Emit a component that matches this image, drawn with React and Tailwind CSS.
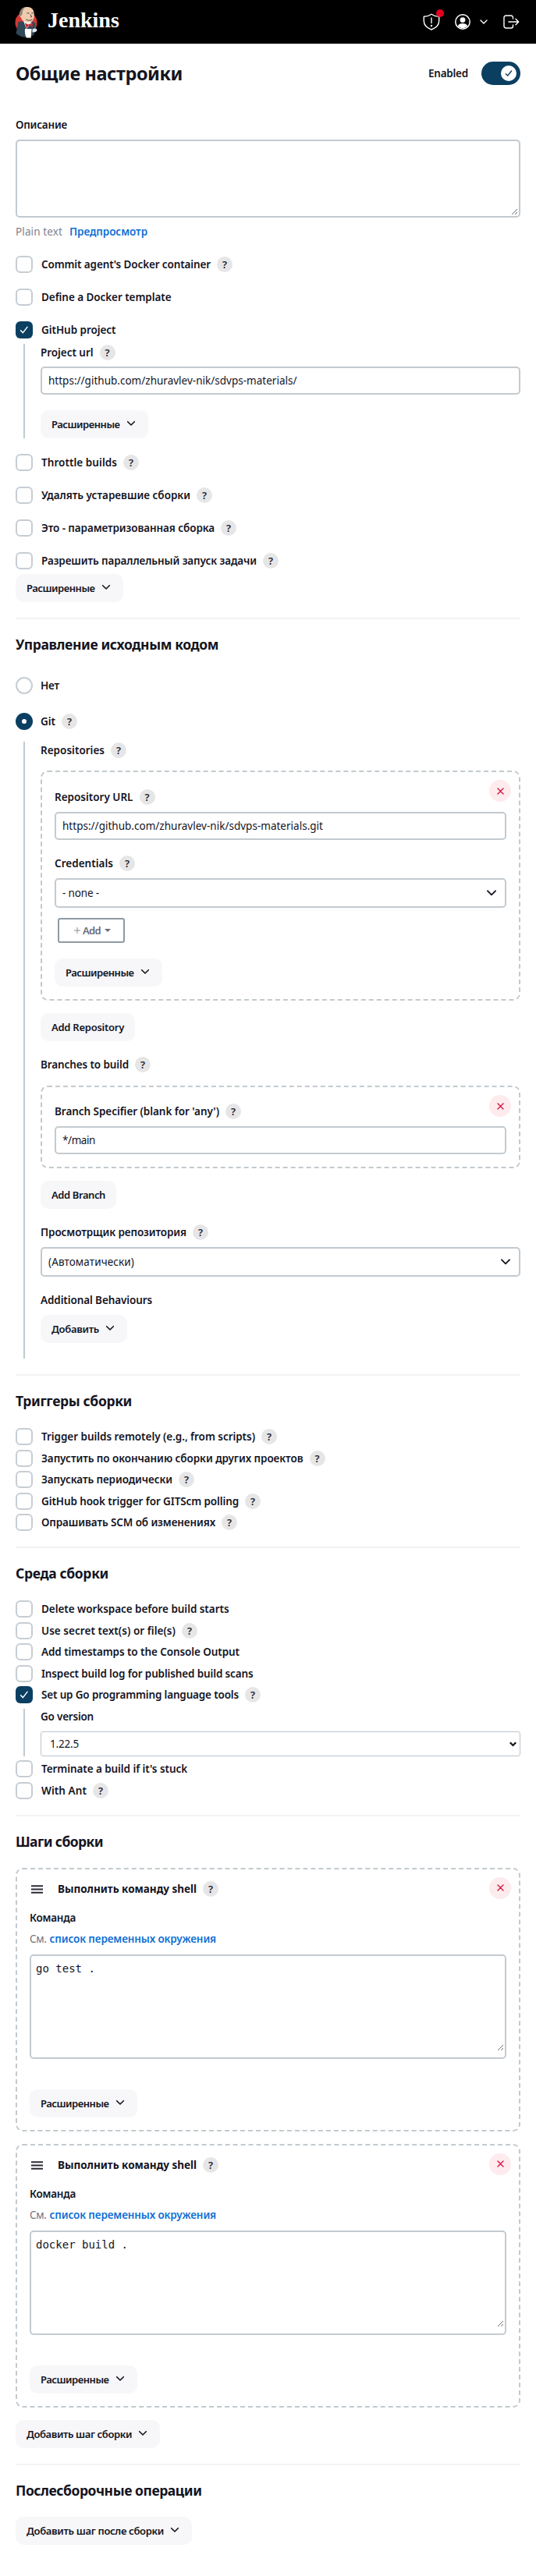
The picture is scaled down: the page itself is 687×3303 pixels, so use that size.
import { useLayoutEffect, useRef, useState } from "react";

/* Text whose letter spacing is adjusted so that the line takes up `w` pixels. */
function Fit({ w, className = "", children }) {
  const ref = useRef(null);
  const [spacing, setSpacing] = useState(0);
  useLayoutEffect(() => {
    const natural = ref.current.getBoundingClientRect().width;
    setSpacing((w - natural) / String(children).length);
  }, [w, children]);
  return (
    <span ref={ref} className={`inline-block shrink-0 whitespace-pre ${className}`} style={{ letterSpacing: `${spacing}px` }}>
      {children}
    </span>
  );
}

function Help() {
  return (
    <span className="ml-2 flex size-5 shrink-0 items-center justify-center rounded-full bg-[#e6e6e7] text-[13px] leading-5 font-semibold text-[#23232d]">
      ?
    </span>
  );
}

function Chevron({ className = "" }) {
  return (
    <svg className={className} width="12" height="8" viewBox="0 0 12 8" fill="none" stroke="currentColor" strokeWidth="1.6" strokeLinecap="round" strokeLinejoin="round">
      <path d="M1.7 1.7 6 6l4.3-4.3" />
    </svg>
  );
}

function Checkbox({ checked }) {
  if (checked) {
    return (
      <span className="flex size-[22px] shrink-0 items-center justify-center rounded-[6px] bg-[#0b3f62] text-white">
        <svg width="12" height="12" viewBox="0 0 12 12" fill="none" stroke="currentColor" strokeWidth="1.5" strokeLinecap="round" strokeLinejoin="round">
          <path d="M1.6 6.8 4.4 9.6 10 2.4" />
        </svg>
      </span>
    );
  }
  return <span className="size-[22px] shrink-0 rounded-[6px] border-2 border-[#c7cdd3] bg-white" />;
}

function Check({ w, help, checked, className = "", children }) {
  return (
    <div className={`flex h-[22px] items-center ${className}`}>
      <Checkbox checked={checked} />
      <Fit w={w} className="ml-[11px] font-semibold">{children}</Fit>
      {help && <Help />}
    </div>
  );
}

function Radio({ w, help, checked, className = "", children }) {
  return (
    <div className={`flex h-[22px] items-center ${className}`}>
      {checked ? (
        <span className="flex size-[22px] shrink-0 items-center justify-center rounded-full bg-[#0b3f62]">
          <span className="size-[6px] rounded-full bg-white" />
        </span>
      ) : (
        <span className="size-[22px] shrink-0 rounded-full border-2 border-[#c7cdd3] bg-white" />
      )}
      <Fit w={w} className="ml-2.5 font-semibold">{children}</Fit>
      {help && <Help />}
    </div>
  );
}

function Label({ w, help, className = "", children }) {
  return (
    <div className={`flex h-5 items-center ${className}`}>
      <Fit w={w} className="font-semibold">{children}</Fit>
      {help && <Help />}
    </div>
  );
}

function Input({ w, className = "", children }) {
  return (
    <div className={`flex h-9 items-center rounded-[5px] border-2 border-[#c3cacf] bg-white px-2 ${className}`}>
      <Fit w={w}>{children}</Fit>
    </div>
  );
}

function Select({ w, className = "", children }) {
  return (
    <div className={`flex h-[38px] items-center justify-between rounded-[5px] border-2 border-[#c3cacf] bg-white pr-2.5 pl-2 ${className}`}>
      <Fit w={w}>{children}</Fit>
      <Chevron className="h-[10px] w-[14px]" />
    </div>
  );
}

function Button({ w, chevron, className = "", children }) {
  return (
    <div className={`flex h-9 w-fit items-center rounded-[10px] bg-[#f7f7f9] px-[14px] text-[13px] font-semibold ${className}`}>
      <Fit w={w}>{children}</Fit>
      {chevron && <Chevron className="mr-0.5 mb-0.5 ml-[8px]" />}
    </div>
  );
}

function Remove() {
  return (
    <span className="absolute top-[10px] right-[10px] flex size-7 items-center justify-center rounded-full bg-[#fdebee] text-[#d5143f]">
      <svg width="9" height="9" viewBox="0 0 9 9" fill="none" stroke="currentColor" strokeWidth="1.4" strokeLinecap="round">
        <path d="M1 1l7 7M8 1 1 8" />
      </svg>
    </span>
  );
}

function Heading({ w, className = "", children }) {
  return (
    <div className={`flex h-6 items-center text-[17.5px] font-bold ${className}`}>
      <Fit w={w}>{children}</Fit>
    </div>
  );
}

function Rule({ className = "" }) {
  return <div className={`h-0.5 bg-[#f3f3f4] ${className}`} />;
}

function Nested({ className = "", children }) {
  return <div className={`ml-[10px] border-l-2 border-[#c1cace] pl-5 ${className}`}>{children}</div>;
}

function Resizer({ className = "" }) {
  return (
    <svg className={className} width="9" height="9" viewBox="0 0 9 9" fill="none" stroke="#6c7075" strokeWidth="1">
      <path d="M1 8 8 1M5 8l3-3" />
    </svg>
  );
}

function Step({ command, className = "" }) {
  return (
    <div className={`relative h-[338px] rounded-[9px] border-2 border-dashed border-[#c3cacf] px-4 pt-[15px] ${className}`}>
      <Remove />
      <div className="flex h-5 items-center pl-[2px]">
        <svg className="mt-[2px]" width="15" height="11" viewBox="0 0 15 11" fill="none" stroke="#2b2b35" strokeWidth="1.9">
          <path d="M0 1.2h15M0 5.5h15M0 9.8h15" />
        </svg>
        <Fit w={178} className="ml-[19px] font-bold">Выполнить команду shell</Fit>
        <Help />
      </div>
      <Label w={59} className="mt-[17px]">Команда</Label>
      <div className="mt-[7px] flex h-5 items-center gap-1">
        <Fit w={21.5} className="text-[#73737f]">См.</Fit>
        <Fit w={213.5} className="font-semibold text-[#0f6fd3]">список переменных окружения</Fit>
      </div>
      <div className="mt-[10px] flex h-[134px] justify-between rounded-[5px] border-2 border-[#c3cacf] bg-white">
        <span className="pt-[6px] pl-[6px] font-['DejaVu_Sans_Mono',monospace] text-[14px] leading-5 whitespace-pre">{command}</span>
        <Resizer className="mt-[113px] mr-px" />
      </div>
      <Button w={87.5} chevron className="mt-[39px]">Расширенные</Button>
    </div>
  );
}

function JenkinsLogo() {
  return (
    <svg width="30" height="41" viewBox="0 0 30 41">
      <circle cx="14.5" cy="21" r="14" fill="#d33833" />
      <path d="M4.5 20 1.5 35c4 3 8 5 14 5l9-3 2-15-5-3z" fill="#2f4757" />
      <path d="M7 6.5C8.500 1.500 14 .3 18.500 1.200c4.500 1 6.500 5 6.300 10.500-.1 5-1.800 9.300-7.800 9.300-5 0-8-2.500-9-6.500C5.500 13 5.500 9 7 6.500z" fill="#eecbae" />
      <path d="M6.300 8.500C7.300 3 12 .8 15.500.8 10.500 2.500 9.500 6 9.500 10l-1 2-2 .5c-.5-1.500-.5-2.700-.2-4z" fill="#8d8174" />
      <path d="M15.500 8.800h3M21.300 8.800h2.400M20 10.500l1.500 3-1.500.5M14.500 17c2.500 1.800 6 1.500 8-.4" fill="none" stroke="#3d2a24" strokeWidth=".9" />
      <path d="M11 18.500 14.500 29l7.500-7.500-2-1.500-5 .5z" fill="#f2f2ee" />
      <path d="M13 21.500l4.500 2 5-2.500.6 5.500-5-1.500-4 3z" fill="#c62f3a" />
      <path d="M13 29h8.500l-.8 11.500H15c-2-3-2.300-7-2-11.500z" fill="#fff" />
      <path d="M22.500 29.500c2-1.500 5-1.500 5.800.3.5 1.700-.8 3.200-2.800 3.500l-3 .2z" fill="#dce6ee" />
    </svg>
  );
}

function Header() {
  return (
    <header className="flex h-14 items-center bg-black pr-[21px] pl-[19px] text-white">
      <JenkinsLogo />
      <span className="mb-1 ml-3 font-['Liberation_Serif',serif] text-[28px] leading-8 font-bold">Jenkins</span>
      <span className="relative ml-auto">
        <svg width="22" height="22" viewBox="0 0 22 22" fill="none" stroke="currentColor" strokeWidth="1.4" strokeLinecap="round" strokeLinejoin="round">
          <path d="M11 1.200C8.500 3 5 4.100 1.300 4.300v5.500c0 5.200 4.500 9.300 9.700 11.200 5.200-1.900 9.700-6 9.700-11.200V4.300C17 4.100 13.500 3 11 1.200z" />
          <path d="M11 6v6.500" />
          <circle cx="11" cy="16" r=".5" fill="currentColor" />
        </svg>
        <span className="absolute -top-[5px] -right-[5px] size-[10px] rounded-full bg-[#e6001f]" />
      </span>
      <svg className="ml-[19px]" width="20" height="20" viewBox="0 0 20 20" fill="none">
        <circle cx="10" cy="10" r="9.200" stroke="currentColor" strokeWidth="1.5" />
        <circle cx="10" cy="7.600" r="3.400" fill="currentColor" />
        <path d="M3.800 15.200c1-2.300 3.400-3.200 6.200-3.200s5.200.9 6.200 3.200C14.700 17 12.500 18.100 10 18.100S5.300 17 3.800 15.200z" fill="currentColor" />
      </svg>
      <svg className="ml-[12px]" width="10" height="6" viewBox="0 0 10 6" fill="none" stroke="currentColor" strokeWidth="1.400" strokeLinecap="round" strokeLinejoin="round">
        <path d="M1 1l4 4 4-4" />
      </svg>
      <svg className="ml-[20px]" width="21" height="18" viewBox="0 0 21 18" fill="none" stroke="currentColor" strokeWidth="1.400" strokeLinecap="round" strokeLinejoin="round">
        <path d="M12.500 5V3.500A2.500 2.500 0 0 0 10 1H3.500A2.500 2.500 0 0 0 1 3.500v11A2.500 2.500 0 0 0 3.500 17H10a2.500 2.500 0 0 0 2.500-2.500V13M7 9h12.500M16 5.200 19.700 9 16 12.800" />
      </svg>
    </header>
  );
}

export default function App() {
  return (
    <div className="min-h-[3303px] w-[687px] bg-white font-['Noto_Sans',sans-serif] text-[13.5px] leading-5 text-[#14141f]">
      <Header />
      <main className="flex flex-col px-5 pt-[23px]">
        <div className="flex h-[30px] items-center">
          <Fit w={214} className="text-[23.5px] font-bold">Общие настройки</Fit>
          <Fit w={51} className="ml-auto font-semibold">Enabled</Fit>
          <span className="ml-[17px] flex h-[30px] w-[50px] items-center justify-end rounded-full bg-[#0b3f62] pr-[5px]">
            <span className="flex size-5 items-center justify-center rounded-full bg-white">
              <svg width="10" height="10" viewBox="0 0 12 12" fill="none" stroke="#0b3f62" strokeWidth="1.700" strokeLinecap="round" strokeLinejoin="round">
                <path d="M1.600 6.800 4.400 9.600 10.400 2.400" />
              </svg>
            </span>
          </span>
        </div>

        <Label w={66} className="mt-[41px]">Описание</Label>
        <div className="mt-[9px] flex h-[100px] items-end justify-end rounded-[5px] border-2 border-[#c3cacf] bg-white">
          <Resizer className="mr-px mb-px" />
        </div>
        <div className="mt-[8px] flex h-5 items-center gap-[9px]">
          <Fit w={60} className="text-[#82828e]">Plain text</Fit>
          <Fit w={100} className="font-semibold text-[#0f6fd3]">Предпросмотр</Fit>
        </div>

        <div className="mt-[21px] flex flex-col gap-5">
          <Check w={217} help>Commit agent's Docker container</Check>
          <Check w={166.5}>Define a Docker template</Check>
          <Check w={95.5} checked>GitHub project</Check>
        </div>
        <Nested className="mt-[7px] h-[121px]">
          <Label w={67.5} help className="pt-px">Project url</Label>
          <Input w={318.5} className="mt-[9px]">https://github.com/zhuravlev-nik/sdvps-materials/</Input>
          <Button w={87.5} chevron className="mt-5">Расширенные</Button>
        </Nested>
        <div className="mt-5 flex flex-col gap-5">
          <Check w={97} help>Throttle builds</Check>
          <Check w={191} help>Удалять устаревшие сборки</Check>
          <Check w={222} help>Это - параметризованная сборка</Check>
          <Check w={276} help>Разрешить параллельный запуск задачи</Check>
        </div>
        <Button w={87.5} chevron className="mt-[6px]">Расширенные</Button>
        <Rule className="mt-5" />

        <Heading w={260} className="mt-[20px]">Управление исходным кодом</Heading>
        <Radio w={24} className="mt-[30px]">Нет</Radio>
        <Radio w={19} help checked className="mt-6">Git</Radio>
        <Nested className="mt-[15px] h-[791px] pt-px">
          <Label w={82} help>Repositories</Label>
          <div className="relative mt-4 h-[295px] rounded-[9px] border-2 border-dashed border-[#c3cacf] px-4 pt-[22px]">
            <Remove />
            <Label w={100.500} help>Repository URL</Label>
            <Input w={334} className="mt-[9px]">https://github.com/zhuravlev-nik/sdvps-materials.git</Input>
            <Label w={75} help className="mt-5">Credentials</Label>
            <Select w={47} className="mt-[9px]">- none -</Select>
            <div className="mt-[13px] ml-1 flex h-8 w-[86px] items-center rounded-[3px] border-2 border-[#8f9aa3] pl-[19px] text-[13px] text-[#6b6b7c]">
              <svg width="8" height="8" viewBox="0 0 8 8" stroke="#8b8b98" strokeWidth="1">
                <path d="M4 0v8M0 4h8" />
              </svg>
              <Fit w={23} className="ml-[3px] font-semibold">Add</Fit>
              <svg className="ml-[5px]" width="8" height="4" viewBox="0 0 8 4" fill="currentColor">
                <path d="M0 0h8L4 4z" />
              </svg>
            </div>
            <Button w={87.5} chevron className="mt-5">Расширенные</Button>
          </div>
          <Button w={93} className="mt-4">Add Repository</Button>
          <Label w={113} help className="mt-5">Branches to build</Label>
          <div className="relative mt-[17px] h-[106px] rounded-[9px] border-2 border-dashed border-[#c3cacf] px-4 pt-[21px]">
            <Remove />
            <Label w={211} help>Branch Specifier (blank for 'any')</Label>
            <Input w={42} className="mt-[9px]">*/main</Input>
          </div>
          <Button w={69} className="mt-4">Add Branch</Button>
          <Label w={187} help className="mt-5">Просмотрщик репозитория</Label>
          <Select w={110} className="mt-[9px]">(Автоматически)</Select>
          <Label w={143} className="mt-5">Additional Behaviours</Label>
          <Button w={61} chevron className="mt-[9px]">Добавить</Button>
        </Nested>
        <Rule className="mt-5" />

        <Heading w={149} className="mt-[20px]">Триггеры сборки</Heading>
        <div className="mt-[23px] flex flex-col gap-[5.5px]">
          <Check w={274} help>Trigger builds remotely (e.g., from scripts)</Check>
          <Check w={335.5} help>Запустить по окончанию сборки других проектов</Check>
          <Check w={168} help>Запускать периодически</Check>
          <Check w={253} help>GitHub hook trigger for GITScm polling</Check>
          <Check w={223} help>Опрашивать SCM об изменениях</Check>
        </div>
        <Rule className="mt-5" />

        <Heading w={119} className="mt-[20px]">Среда сборки</Heading>
        <div className="mt-[23px] flex flex-col gap-[5.5px]">
          <Check w={240.5}>Delete workspace before build starts</Check>
          <Check w={172} help>Use secret text(s) or file(s)</Check>
          <Check w={254}>Add timestamps to the Console Output</Check>
          <Check w={271.5}>Inspect build log for published build scans</Check>
          <Check w={253} help checked>Set up Go programming language tools</Check>
        </div>
        <Nested className="mt-[7px] h-[61px]">
          <Label w={68}>Go version</Label>
          <div className="mt-[9px] flex h-8 items-center justify-between rounded-[3px] border border-[#bcc4ca] bg-white pr-1 pl-[11px]">
            <Fit w={37}>1.22.5</Fit>
            <svg width="9" height="7" viewBox="0 0 9 7" fill="none" stroke="#14141f" strokeWidth="2.200">
              <path d="M.8 1.200 4.500 5 8.200 1.200" />
            </svg>
          </div>
        </Nested>
        <div className="mt-[5px] flex flex-col gap-[5.5px]">
          <Check w={187}>Terminate a build if it's stuck</Check>
          <Check w={58} help>With Ant</Check>
        </div>
        <Rule className="mt-5" />

        <Heading w={112} className="mt-[20px]">Шаги сборки</Heading>
        <Step command="go test ." className="mt-[22px]" />
        <Step command="docker build ." className="mt-4" />
        <Button w={135} chevron className="mt-4">Добавить шаг сборки</Button>
        <Rule className="mt-5" />

        <Heading w={238.5} className="mt-[20px]">Послесборочные операции</Heading>
        <Button w={176} chevron className="mt-[22px]">Добавить шаг после сборки</Button>
      </main>
    </div>
  );
}
